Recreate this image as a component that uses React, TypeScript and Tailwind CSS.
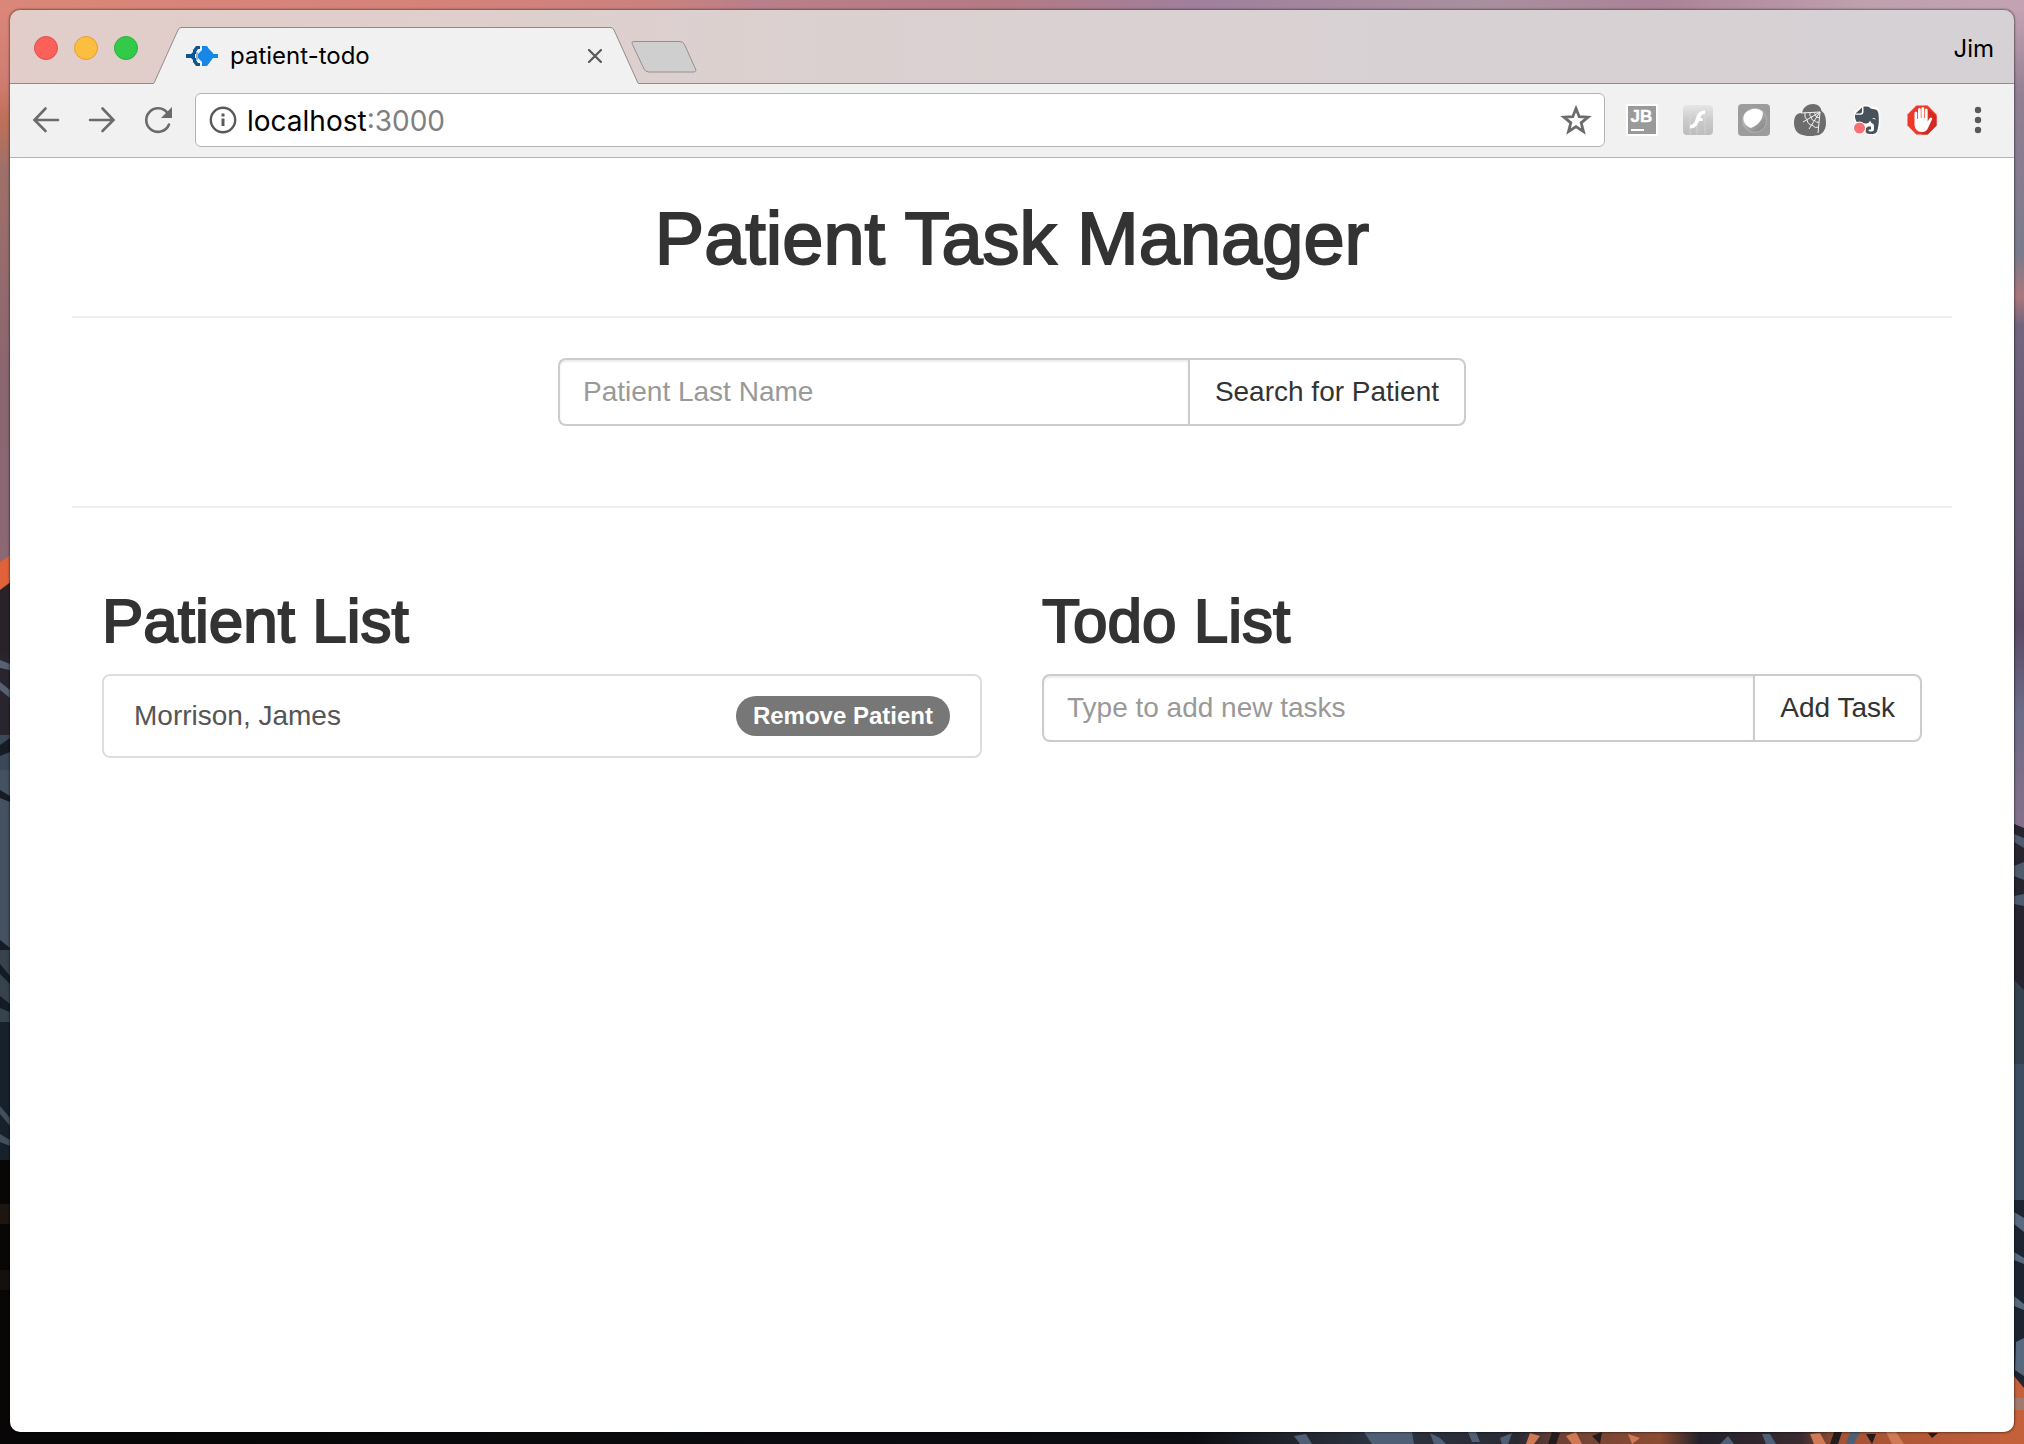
import type { ReactNode } from "react";

const SYSTEM = 'font-["Inter","Roboto",sans-serif]';
const HELVETICA = 'font-["Liberation_Sans",Arial,sans-serif]';

function Wallpaper() {
  return (
    <svg
      className="absolute inset-0 h-full w-full"
      viewBox="0 0 2024 1444"
      preserveAspectRatio="none"
      aria-hidden="true"
    >
      <defs>
        <linearGradient id="sky" x1="0" x2="1" y1="0" y2="0">
          <stop offset="0" stopColor="#da8678" />
          <stop offset="0.22" stopColor="#d5827a" />
          <stop offset="0.33" stopColor="#c9817f" />
          <stop offset="0.37" stopColor="#b97f8a" />
          <stop offset="0.5" stopColor="#b37a86" />
          <stop offset="0.59" stopColor="#a07f9c" />
          <stop offset="0.73" stopColor="#a8909f" />
          <stop offset="0.82" stopColor="#ab8297" />
          <stop offset="0.92" stopColor="#bfa0ad" />
          <stop offset="1" stopColor="#c3a2b2" />
        </linearGradient>
        <linearGradient id="leftEdge" x1="0" x2="0" y1="0" y2="1">
          <stop offset="0" stopColor="#da8678" />
          <stop offset="0.05" stopColor="#cf7d72" />
          <stop offset="0.075" stopColor="#c07058" />
          <stop offset="0.11" stopColor="#9f7069" />
          <stop offset="0.25" stopColor="#8b6670" />
          <stop offset="0.385" stopColor="#8a6874" />
        </linearGradient>
        <linearGradient id="rightEdge" x1="0" x2="0" y1="0" y2="1">
          <stop offset="0" stopColor="#c3a2b2" />
          <stop offset="0.06" stopColor="#917f93" />
          <stop offset="0.17" stopColor="#7a7b8c" />
          <stop offset="0.2" stopColor="#a9787c" />
          <stop offset="0.22" stopColor="#71657f" />
          <stop offset="0.36" stopColor="#635873" />
          <stop offset="0.43" stopColor="#5b4a66" />
          <stop offset="0.49" stopColor="#6c6c88" />
          <stop offset="0.565" stopColor="#84708a" />
        </linearGradient>
        <linearGradient id="ground" x1="0" x2="1" y1="0" y2="0">
          <stop offset="0" stopColor="#080606" />
          <stop offset="0.59" stopColor="#0b0d12" />
          <stop offset="0.62" stopColor="#1b1d24" />
          <stop offset="0.68" stopColor="#2c3441" />
          <stop offset="0.75" stopColor="#2a2a33" />
          <stop offset="0.77" stopColor="#6d4135" />
          <stop offset="0.82" stopColor="#8c4c33" />
          <stop offset="0.84" stopColor="#23212a" />
          <stop offset="0.89" stopColor="#3a2b30" />
          <stop offset="0.91" stopColor="#a55235" />
          <stop offset="1" stopColor="#c4603a" />
        </linearGradient>
      </defs>
      <rect width="2024" height="1444" fill="url(#sky)" />
      <rect y="10" width="40" height="1434" fill="url(#leftEdge)" />
      <path d="M0 562L6 558L20 550V600H0Z" fill="#e0623a" />
      <path d="M0 590L20 575V740H0Z" fill="#292229" />
      <rect y="655" width="20" height="80" fill="#28252e" />
      <path d="M0 660L10 664V670L0 668ZM0 682L10 690V698L0 690Z" fill="#566174" />
      <rect y="735" width="20" height="85" fill="#3a4858" />
      <rect y="770" width="20" height="180" fill="#445160" />
      <path d="M0 790L10 796V802L0 798ZM0 745L10 738V752L0 756ZM0 940L10 948V958L0 952Z" fill="#161c26" />
      <rect y="1020" width="20" height="140" fill="#16212b" />
      <rect y="950" width="20" height="72" fill="#36434f" />
      <path d="M0 964L10 976V984L0 974ZM0 996L10 1004V1012L0 1008Z" fill="#131c26" />
      <path d="M0 1106L10 1118V1126L0 1114ZM0 1134L10 1140V1146L0 1142Z" fill="#42505e" />
      <rect y="1160" width="20" height="284" fill="#090706" />
      <rect y="1204" width="20" height="20" fill="#1d1510" />
      <rect y="1270" width="20" height="20" fill="#14100e" />
      <rect x="1990" y="10" width="34" height="1434" fill="url(#rightEdge)" />
      <path d="M2000 818L2024 828V1444H2000Z" fill="#26242e" />
      <path
        d="M2014 834L2024 838V848L2014 842ZM2014 866L2024 862V880L2014 876ZM2014 896L2024 894V906L2014 904Z"
        fill="#4e5a6e"
      />
      <path d="M2014 980L2024 990V1064L2014 1070Z" fill="#34414f" />
      <path d="M2014 1064H2024V1200H2014Z" fill="#3c4e61" />
      <path d="M2014 1200H2024V1380H2014Z" fill="#1b2430" />
      <path
        d="M2014 1212L2024 1218V1232L2014 1224ZM2014 1252L2024 1258V1264L2014 1260ZM2014 1296L2024 1304V1310L2014 1306ZM2016 1342L2024 1338V1376L2015 1370Z"
        fill="#56697f"
      />
      <rect y="1425" width="2024" height="19" fill="url(#ground)" />
      <path d="M2000 1380L2014 1376L2024 1388V1444H2000Z" fill="#c4603a" />
      <path d="M2014 1398H2024V1410H2014Z" fill="#a0796f" />
      <g fill="#4f6076">
        <path d="M1294 1436L1306 1434L1312 1444H1300Z" />
        <path d="M1364 1432H1412L1414 1444H1372Z" />
        <path d="M1430 1433L1440 1438L1446 1444H1434ZM1468 1432H1476L1480 1442H1472ZM1500 1438L1512 1433L1508 1444H1502Z" />
        <path d="M1720 1444L1728 1436L1734 1444ZM1762 1434H1770L1776 1444H1766ZM1850 1432H1860L1854 1444H1846Z" />
      </g>
      <g fill="#cf7a55">
        <path d="M1530 1433L1540 1436L1534 1444H1526ZM1566 1436L1576 1432L1582 1444H1572ZM1628 1434L1640 1438L1632 1444ZM1810 1434L1820 1433L1826 1444H1814ZM1886 1432H1896L1904 1444H1892Z" />
      </g>
      <g fill="#241b1f">
        <path d="M1552 1432L1560 1433L1556 1444H1548ZM1592 1436L1602 1432L1600 1444ZM1834 1432H1842L1838 1444H1830ZM1866 1434H1876L1872 1444ZM1928 1433H1938L1932 1438Z" />
      </g>
    </svg>
  );
}

function TrafficLight({ color, label }: { color: string; label: string }) {
  return <button type="button" aria-label={label} className={`h-6 w-6 rounded-full border ${color}`} />;
}

function Favicon() {
  return (
    <svg viewBox="0 0 32 20" className="h-5 w-8" aria-hidden="true">
      <path d="M14 0H10L7 4V6L5 8H0V12H5L7 14V16L10 20H14V17H12L10 14V12H9V8H10V6L12 3H14Z" fill="#0b5594" />
      <path d="M10 6H12V14H10Z" fill="#9bb9d2" />
      <path d="M16 0H21L23 3L27 7V8H32V12H27L21 20H16V16L12 12V8L16 4Z" fill="#1687e6" />
    </svg>
  );
}

function Tab() {
  return (
    <div className="flex h-[57px] items-stretch">
      <svg viewBox="0 0 28 57" className="h-[57px] w-7" aria-hidden="true">
        <path d="M0 57V56.5L1.5 55L25 3Q26.500 .5 28 .5V57Z" fill="#f1f1f1" />
        <path d="M0 56.500Q1 56.500 1.500 55L25 3Q26.500 .5 28 .5" fill="none" stroke="#94898a" />
      </svg>
      <div className="flex w-[430px] items-center border-t border-[#94898a] bg-[#f1f1f1] pl-[5px]">
        <Favicon />
        <span className={`${SYSTEM} ml-3 flex-1 text-[24px] leading-[30px] text-black`}>patient-todo</span>
        <button type="button" aria-label="Close tab" className="mr-1 flex h-6 w-6 items-center justify-center">
          <svg viewBox="0 0 14 14" className="h-[14px] w-[14px]" aria-hidden="true">
            <path d="M1 1L13 13M13 1L1 13" stroke="#5a5a5a" strokeWidth="2.200" strokeLinecap="round" />
          </svg>
        </button>
      </div>
      <svg viewBox="0 0 28 57" className="h-[57px] w-7" aria-hidden="true">
        <path d="M0 .5Q1.500 .5 3 3L26.500 55L28 56.500V57H0Z" fill="#f1f1f1" />
        <path d="M0 .5Q1.500 .5 3 3L26.500 55Q27 56.500 28 56.500" fill="none" stroke="#94898a" />
      </svg>
    </div>
  );
}

function TitleBar() {
  return (
    <div className="flex h-[74px] items-start bg-linear-to-r from-[#e2cdc9] via-[#dad1d2] to-[#d6d1d5]">
      <div className="flex h-[74px] w-[143px] items-start gap-4 border-b border-[#94898a] pt-[26px] pl-6">
        <TrafficLight label="Close" color="border-[#e0504b] bg-[#fc605b]" />
        <TrafficLight label="Minimize" color="border-[#dfa033] bg-[#fdbe40]" />
        <TrafficLight label="Zoom" color="border-[#2bb03c] bg-[#34ca49]" />
      </div>
      <div className="pt-[17px]">
        <Tab />
      </div>
      <div className="flex h-[74px] flex-1 items-center justify-between border-b border-[#95898c] pt-1 pr-5">
        <button type="button" aria-label="New tab" className="mt-4 -ml-2">
          <svg viewBox="0 0 66 32" className="h-8 w-[66px]" aria-hidden="true">
            <path
              d="M3 .5H49Q52 .5 53.500 3.500L64.500 28Q66 31 62 31H18Q14.500 31 13 28L1.500 3.500Q0 .5 3 .5Z"
              fill="#cfcfcf"
              stroke="#988e90"
            />
          </svg>
        </button>
        <span className={`${SYSTEM} text-[24px] leading-[30px] text-black`}>Jim</span>
      </div>
    </div>
  );
}

function ToolButton({ label, children }: { label: string; children: ReactNode }) {
  return (
    <button type="button" aria-label={label} className="h-8 w-8 shrink-0">
      <svg viewBox="0 0 32 32" className="h-8 w-8" fill="none" aria-hidden="true">
        {children}
      </svg>
    </button>
  );
}

function Extensions() {
  return (
    <div className="flex gap-6">
      <ToolButton label="JetBrains">
        <rect width="32" height="32" fill="#fff" />
        <rect x="2" y="2" width="28" height="28" fill="#9a9a9a" />
        <text x="4.500" y="17.500" fontFamily="Liberation Sans" fontWeight="700" fontSize="17" fill="#fff" stroke="#fff" strokeWidth=".4">
          JB
        </text>
        <rect x="5" y="25" width="13" height="2" fill="#fff" />
      </ToolButton>
      <ToolButton label="Flash">
        <defs>
          <linearGradient id="flash" x1="0" y1="0" x2="0" y2="1">
            <stop offset="0" stopColor="#e6e6e6" />
            <stop offset="0.5" stopColor="#cbcbcb" />
            <stop offset="1" stopColor="#bdbdbd" />
          </linearGradient>
        </defs>
        <rect x="1" y="1" width="30" height="30" rx="4" fill="url(#flash)" />
        <path d="M8 1V31M15 1V31M23 1V31" stroke="#dedede" strokeWidth=".6" />
        <path
          d="M23 6.500C17.500 6 15.500 10 14 14C12.500 18.500 11.500 20.500 8 21V24.500C13.500 24.500 15.500 21 17 17H20.500V14H18.200C19 11.500 20 10 23 10Z"
          fill="#fff"
        />
      </ToolButton>
      <ToolButton label="Recorder">
        <defs>
          <linearGradient id="lens" x1="0" y1="0" x2="1" y2="1">
            <stop offset="0.2" stopColor="#c2c2c2" />
            <stop offset="1" stopColor="#7d7d7d" />
          </linearGradient>
        </defs>
        <rect width="32" height="32" rx="4" fill="#9c9c9c" />
        <circle cx="16.500" cy="16.500" r="12" fill="url(#lens)" stroke="#b3b3b3" />
        <path d="M12 6C16 4 21 4.500 24.500 7.500C26 13 22 20.500 13 24C8 22.500 5 18 5.500 13C6.300 9.500 9 7 12 6Z" fill="#fff" />
      </ToolButton>
      <ToolButton label="Spider web">
        <path
          d="M8 9C9 3 14 0 19 0C24 0 27 3 27.500 7C31 9 32 14 32 19C32 27 27 32 21 31.500C18 32.500 14 32.500 11 31.500C4 31 0 26 0 19C0 12 3 8.500 8 9Z"
          fill="#6d6d6d"
        />
        <g stroke="#f4f4f4" strokeWidth="1">
          <path d="M26 8L7 9M26 8L9 18M26 8L15 25M26 8L24 29" />
          <path d="M21 8.300Q20 10 21.500 10.800Q21.500 13 23 13Q24 14.500 25.500 13M16 8.500Q15 12 17.500 13.200Q17.500 17 21 16.500Q22.500 19.500 25 18M11 8.800Q10 14 13 15.800Q14 21 18 21Q21.500 25 24.300 23" />
        </g>
      </ToolButton>
      <ToolButton label="Evernote">
        <g transform="translate(1 0)">
          <path d="M4 9L12 2H17L20 4H25L28 8V22L25 30H17L13 25L15 20L4 16Z" fill="#fff" stroke="#fff" strokeWidth="2.500" strokeLinejoin="round" />
          <path
            d="M11 3.500V7.500Q11 9.500 9 9.500H4.500Z M12.500 2.500H16Q18.500 2.500 19.500 4.500L24.500 5.500Q27 6 27.500 10Q28.500 19 26.500 26Q25.500 30 21.500 30H19Q14.500 30 14.500 26.500Q14.500 23.500 17 22.500H20V25.500H18.500Q17.500 25.500 17.500 26.500Q17.500 27.500 19 27.500H20.500Q23 27.500 23 25V22Q23 19.500 20.500 19L19 16.500Q18 20 14.500 19.500L8 19Q4.500 18.500 4 13V10.800H10Q12.500 10.500 12.500 8Z"
            fill="#47525a"
          />
          <path d="M21 14.500Q23.500 13 25 15.500Q22.500 15 21 14.500Z" fill="#fff" />
        </g>
        <circle cx="9.500" cy="24" r="6.500" fill="#fff" />
        <circle cx="9.500" cy="24" r="5.500" fill="#fb7072" />
      </ToolButton>
      <ToolButton label="Ad blocker">
        <path d="M10 1H22L31 10V22L22 31H10L1 22V10Z" fill="#e9e9e9" />
        <path d="M10.400 1.500H21.600L30.500 10.400V21.600L21.600 30.500H10.400L1.500 21.600V10.400Z" fill="#ef3829" />
        <path d="M22 5L30.500 12V21.600L21.600 30.500H15L23 18Z" fill="#d32a20" />
        <path
          d="M8.500 9Q8.500 7.500 9.800 7.500Q11.200 7.500 11.200 9V15H12V5.500Q12 4 13.400 4Q14.800 4 14.800 5.500V14H15.400V4.500Q15.400 3 16.800 3Q18.200 3 18.200 4.500V14H18.900V6Q18.900 4.500 20.200 4.500Q21.600 4.500 21.600 6V17.500L23.500 14.500Q24.500 13 26 14Q26.500 15 25.500 16.500L22 24Q20.500 28 16 28Q9 28 8.500 21Z"
          fill="#fff"
        />
      </ToolButton>
      <ToolButton label="Menu">
        <g fill="#5a5a5a">
          <circle cx="16" cy="6" r="3.200" />
          <circle cx="16" cy="16" r="3.200" />
          <circle cx="16" cy="26" r="3.200" />
        </g>
      </ToolButton>
    </div>
  );
}

function Toolbar() {
  return (
    <div className="flex h-[74px] items-center gap-[21px] border-b border-[#b4b4b4] bg-[#f1f1f1] px-5 pb-px">
      <div className="flex gap-6">
        <ToolButton label="Back">
          <path d="M28 16H5M15.500 4.500L4.500 16L15.500 27" stroke="#6b6b6b" strokeWidth="2.600" strokeLinecap="round" />
        </ToolButton>
        <ToolButton label="Forward">
          <path d="M4 16H27M16.500 4.500L27.500 16L16.500 27" stroke="#6b6b6b" strokeWidth="2.600" strokeLinecap="round" />
        </ToolButton>
        <ToolButton label="Reload">
          <path d="M25.500 9A11.800 11.800 0 1 0 27 20.500" stroke="#6b6b6b" strokeWidth="2.600" strokeLinecap="round" />
          <path d="M30 3V14H19Z" fill="#6b6b6b" />
        </ToolButton>
      </div>
      <div className="flex h-[54px] flex-1 items-center rounded-md border border-[#b4b4b4] bg-white pr-3 pl-[11px]">
        <ToolButton label="Site information">
          <circle cx="16" cy="16" r="12.200" stroke="#5a5a5a" strokeWidth="2.400" />
          <path d="M14.500 9.500H17.500V12.500H14.500ZM14.500 14.500H17.500V22H14.500Z" fill="#5a5a5a" />
        </ToolButton>
        <label className={`${SYSTEM} relative ml-2 flex flex-1 items-center pt-[2px] text-[28px] leading-[34px]`}>
          <span className="text-black">localhost</span>
          <span className="text-[#808080]">:3000</span>
          <input
            aria-label="Address"
            className="absolute inset-0 w-full bg-transparent text-transparent outline-none"
          />
        </label>
        <ToolButton label="Bookmark this page">
          <path
            d="M16 4.500L19.200 12.700L28 13.200L21.200 18.800L23.500 27.500L16 22.600L8.500 27.500L10.800 18.800L4 13.200L12.800 12.700Z"
            stroke="#6b6b6b"
            strokeWidth="2.800"
          />
        </ToolButton>
      </div>
      <Extensions />
    </div>
  );
}

function InputGroup({ label, placeholder, action }: { label: string; placeholder: string; action: string }) {
  return (
    <form className="flex h-[68px]" onSubmit={(event) => event.preventDefault()}>
      <input
        aria-label={label}
        type="text"
        placeholder={placeholder}
        className="min-w-0 flex-1 rounded-l-lg border-2 border-r-0 border-[#ccc] bg-white px-[23px] text-[28px] leading-10 text-[#555] shadow-[inset_0_2px_2px_rgba(0,0,0,0.075)] outline-none placeholder:text-[#999] placeholder:opacity-100"
      />
      <button
        type="submit"
        className="rounded-r-lg border-2 border-[#ccc] bg-white px-[25px] text-[28px] leading-10 text-[#333]"
      >
        {action}
      </button>
    </form>
  );
}

function Page() {
  const heading = "font-normal text-[#333] [-webkit-text-stroke:2px_#333]";
  return (
    <main className={`${HELVETICA} flex-1 bg-white px-[62px] pt-[42px]`}>
      <h1 className={`${heading} mb-[38px] text-center text-[74px] leading-[78px]`}>Patient Task Manager</h1>
      <hr className="border-t-2 border-[#eee]" />
      <div className="mx-auto my-10 w-[calc(50%-32px)] pb-10">
        <InputGroup label="Patient last name" placeholder="Patient Last Name" action="Search for Patient" />
      </div>
      <hr className="border-t-2 border-[#eee]" />
      <div className="mt-20 grid grid-cols-2 gap-[60px] px-[30px]">
        <section>
          <h2 className={`${heading} mb-5 text-[62px] leading-[66px]`}>Patient List</h2>
          <ul>
            <li className="flex h-[84px] items-center justify-between rounded-lg border-2 border-[#ddd] px-[30px] text-[28px] leading-10 text-[#555]">
              <span>Morrison, James</span>
              <button
                type="button"
                className="h-10 rounded-full bg-[#777] px-[17px] text-[24px] leading-10 font-bold text-white"
              >
                Remove Patient
              </button>
            </li>
          </ul>
        </section>
        <section>
          <h2 className={`${heading} mb-5 text-[62px] leading-[66px]`}>Todo List</h2>
          <InputGroup label="New task" placeholder="Type to add new tasks" action="Add Task" />
        </section>
      </div>
    </main>
  );
}

export default function App() {
  return (
    <div className="relative flex min-h-screen flex-col px-[10px] pt-[10px] pb-3">
      <Wallpaper />
      <div className="relative flex flex-1 flex-col overflow-hidden rounded-[10px] shadow-[0_0_2px_1px_rgba(0,0,0,0.4)]">
        <TitleBar />
        <Toolbar />
        <Page />
      </div>
    </div>
  );
}
